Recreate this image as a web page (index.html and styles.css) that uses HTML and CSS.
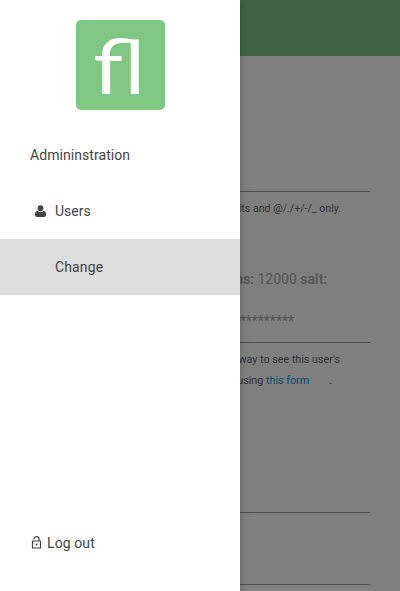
FILE: index.html
```html
<!DOCTYPE html>
<html lang="en">
<head>
<meta charset="utf-8">
<title>Change user</title>
<link rel="stylesheet" href="styles.css">
</head>
<body>
<div class="page">
  <header class="topbar"></header>
  <main class="form">
    <div class="field name-field"></div>
    <p class="help">its and @/./+/-/_ only.</p>
    <div class="field password-field">
      <p class="hash"><strong>iterations:</strong> 12000 <strong>salt:</strong></p>
      <p class="stars">*************</p>
    </div>
    <p class="help note">way to see this user's</p>
    <p class="help note form-link">using <a href="#">this form</a><span class="stop">.</span></p>
    <div class="field first-field"></div>
    <div class="field last-field"></div>
  </main>
</div>
<div class="scrim"></div>
<nav class="drawer">
  <div class="logo"><span>ﬂ</span></div>
  <div class="heading">Admininstration</div>
  <a class="item" href="#">
    <svg class="user" viewBox="0 0 11 12"><path d="M2.6 3.3a2.9 3.1 0 0 1 5.8 0c0 1.9-1.1 3.3-2.9 3.3S2.6 5.2 2.6 3.3ZM2.4 5.8C3.7 7.5 7.3 7.5 8.6 5.8c1.7.2 2.4 2 2.4 4 0 1.4-.9 2.2-2 2.2H2c-1.1 0-2-.8-2-2.2 0-2 .7-3.8 2.4-4Z"/></svg>
    Users
  </a>
  <a class="item active" href="#">Change</a>
  <a class="logout" href="#">
    <svg class="lock" viewBox="0 0 11 13"><path d="M1.5 5h8v7h-8zM3 3.5V3a2.5 2.3 0 0 1 5 0v2"/><circle cx="5.5" cy="8.5" r="1"/></svg>
    Log out
  </a>
</nav>
</body>
</html>
```
FILE: styles.css
```css
* { box-sizing: border-box; }
body {
  margin: 0;
  height: 591px;
  overflow: hidden;
  position: relative;
  background: #fff;
  color: #444;
  font-family: Roboto, sans-serif;
  font-size: 14px;
}
p { margin: 0; }
a { color: inherit; text-decoration: none; }
.page { height: 591px; overflow: hidden; }
.topbar { height: 56px; background: #81c784; }
.form { padding: 0 30px; text-align: right; }
.field { border-bottom: 1px solid #9e9e9e; }
.name-field { height: 136px; }
.help { height: 21px; padding: 0 29px 0 0; margin-top: 6px; color: #666; font-size: 10.6px; line-height: 21px; white-space: nowrap; }
.password-field { height: 124px; color: #aaa; padding-top: 50px; }
.hash { padding-right: 43px; line-height: 20px; }
.hash strong { font-weight: 500; }
.stars { padding-right: 76px; margin-top: 22px; line-height: 20px; }
.note { padding-right: 30px; font-size: 10.75px; }
.form-link { margin-top: 0; padding-right: 38px; }
.form-link a { color: #039be5; }
.stop { margin-left: 20px; }
.first-field { height: 122px; }
.last-field { height: 72px; }
.scrim { position: absolute; inset: 0; background: rgba(0, 0, 0, .5); }
.drawer {
  position: absolute;
  inset: 0 auto 0 0;
  width: 240px;
  padding-top: 20px;
  display: flex;
  flex-direction: column;
  background: #fff;
  box-shadow: 0 2px 5px rgba(0, 0, 0, .16), 0 2px 10px rgba(0, 0, 0, .12);
}
.logo {
  width: 89px;
  height: 90px;
  margin: 0 auto 17px 76px;
  border-radius: 5px;
  background: #81c784;
  color: #fff;
  font: 75px/90px Lato, sans-serif;
  text-align: center;
}
.logo span { display: inline-block; transform: translateX(-1px) scaleX(1.18); }
.heading, .item { height: 56px; line-height: 56px; }
.heading { padding-left: 30px; letter-spacing: .06px; }
.item { display: flex; padding-left: 55px; }
.user { width: 11px; height: 12px; margin: 22px 9px 0 -20px; fill: #444; }
.active { background: #ddd; letter-spacing: .12px; }
.logout { display: flex; align-items: center; height: 56px; margin: auto 0 20px 31px; letter-spacing: .1px; }
.lock { width: 11px; height: 13px; margin: -2px 5px 0 0; fill: none; stroke: #444; stroke-width: 1.2; }
.lock circle { fill: #444; stroke: none; }
```
